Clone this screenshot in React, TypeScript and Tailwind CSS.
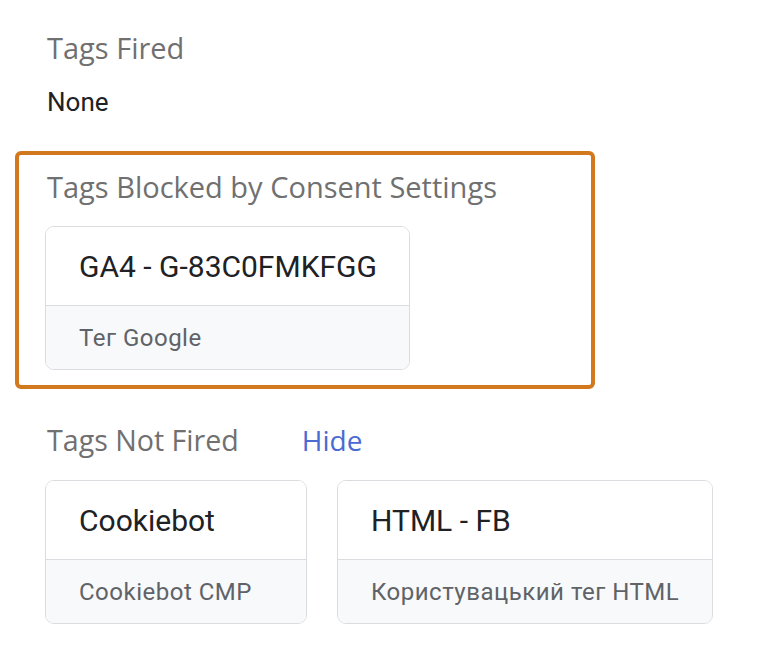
const headingFont = { fontFamily: '"Open Sans", "Noto Sans", sans-serif' };

interface TagCardProps {
  name: string;
  type: string;
  width: string;
}

function TagCard({ name, type, width }: TagCardProps) {
  return (
    <div className={`${width} rounded-[9px] border border-[#dadce0] overflow-hidden`}>
      <div className="h-[78px] flex items-center px-[33px] bg-white">
        <span className="text-[30px] text-[#202124] whitespace-nowrap">{name}</span>
      </div>
      <div className="h-[64px] flex items-center px-[33px] bg-[#f8f9fa] border-t border-[#dadce0]">
        <span className="text-[24px] tracking-[0.5px] text-[#5f6368] whitespace-nowrap">{type}</span>
      </div>
    </div>
  );
}

export default function App() {
  return (
    <div
      className="min-h-[669px] bg-white pt-[30px]"
      style={{ fontFamily: 'Roboto, "Liberation Sans", sans-serif' }}
    >
      <div className="px-[47px]">
        <h2 className="text-[29px] leading-[36px] text-[#707070]" style={headingFont}>
          Tags Fired
        </h2>
        <div className="mt-[20px] text-[26px] leading-[32px] text-[#202124]">None</div>
      </div>

      <div className="mt-[33px] ml-[15px] w-[580px] rounded-md border-4 border-[#d2781e] px-[26px] pt-[14px] pb-[15px]">
        <h2 className="pl-[2px] text-[29px] leading-[36px] text-[#707070]" style={headingFont}>
          Tags Blocked by Consent Settings
        </h2>
        <div className="mt-[21px]">
          <TagCard name="GA4 - G-83C0FMKFGG" type="Тег Google" width="w-[365px]" />
        </div>
      </div>

      <div className="px-[45px] mt-[33px]">
        <div className="flex items-center gap-[63px] pl-[2px]">
          <h2 className="text-[28.6px] leading-[36px] text-[#707070]" style={headingFont}>
            Tags Not Fired
          </h2>
          <button className="text-[28px] leading-[36px] text-[#4a6bd2]" style={headingFont}>
            Hide
          </button>
        </div>
        <div className="mt-[22px] flex gap-[30px]">
          <TagCard name="Cookiebot" type="Cookiebot CMP" width="w-[262px]" />
          <TagCard name="HTML - FB" type="Користувацький тег HTML" width="w-[376px]" />
        </div>
      </div>
    </div>
  );
}
